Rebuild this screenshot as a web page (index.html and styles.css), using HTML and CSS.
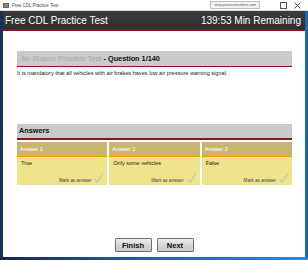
FILE: index.html
```html
<!DOCTYPE html>
<html lang="en">
<head>
  <meta charset="UTF-8">
  <meta name="viewport" content="width=device-width, initial-scale=1.0">
  <title>Free CDL Practice Test</title>
  <link rel="stylesheet" href="styles.css">
</head>
<body>
  <div class="window">
    <div class="titlebar">
      <span class="app-icon"></span>
      <span class="win-title">Free CDL Practice Test</span>
      <span class="url">www.practicetestsfree.com</span>
      <span class="ctl">
        <svg width="7" height="7" viewBox="0 0 7 7"><rect x="0.5" y="0.5" width="6" height="6" fill="none" stroke="#555" stroke-width="1"/></svg>
      </span>
      <span class="ctl">
        <svg width="7" height="7" viewBox="0 0 7 7"><path d="M0.5 0.5 L6.5 6.5 M6.5 0.5 L0.5 6.5" stroke="#555" stroke-width="1"/></svg>
      </span>
    </div>

    <div class="frame">
      <div class="app">
        <header class="topbar">
          <span>Free CDL Practice Test</span>
          <span>139:53 Min Remaining</span>
        </header>

        <main class="content">
          <div class="section-bar question-bar"><span class="muted">Air Brakes Practice Test</span> - Question 1/140</div>
          <p class="question">It is mandatory that all vehicles with air brakes haves low air pressure warning signal.</p>

          <div class="section-bar answers-bar">Answers</div>
          <div class="answers">
            <div class="answer">
              <div class="answer-head">Answer 1</div>
              <div class="answer-body">
                <div class="answer-text">True</div>
                <div class="mark">Mark as answer
                  <svg width="10" height="11" viewBox="0 0 10 11"><path d="M0.8 7 L3.2 10 L9.4 0.6" fill="none" stroke="#c3c8b4" stroke-width="1.3"/></svg>
                </div>
              </div>
            </div>
            <div class="answer">
              <div class="answer-head">Answer 2</div>
              <div class="answer-body">
                <div class="answer-text">Only some vehicles</div>
                <div class="mark">Mark as answer
                  <svg width="10" height="11" viewBox="0 0 10 11"><path d="M0.8 7 L3.2 10 L9.4 0.6" fill="none" stroke="#c3c8b4" stroke-width="1.3"/></svg>
                </div>
              </div>
            </div>
            <div class="answer">
              <div class="answer-head">Answer 3</div>
              <div class="answer-body">
                <div class="answer-text">False</div>
                <div class="mark">Mark as answer
                  <svg width="10" height="11" viewBox="0 0 10 11"><path d="M0.8 7 L3.2 10 L9.4 0.6" fill="none" stroke="#c3c8b4" stroke-width="1.3"/></svg>
                </div>
              </div>
            </div>
          </div>
        </main>

        <div class="nav">
          <button class="btn">Finish</button>
          <button class="btn">Next</button>
        </div>
      </div>
    </div>

    <div class="taskbar"></div>
  </div>
</body>
</html>
```

FILE: styles.css
```css
body {
  margin: 0;
  padding: 0;
  font-family: "Liberation Sans", Arial, sans-serif;
  background: #ffffff;
}

.window {
  width: 308px;
  height: 260px;
  display: flex;
  flex-direction: column;
  overflow: hidden;
}

/* window chrome */
.titlebar {
  height: 11px;
  display: flex;
  align-items: center;
  background: #ffffff;
  border-bottom: 1px solid #d8d8d8;
  box-sizing: border-box;
  padding: 0 4px 0 3px;
}

.app-icon {
  width: 6px;
  height: 5px;
  background: #8a8a8a;
  border: 1px solid #666;
  box-sizing: border-box;
  margin-right: 3px;
}

.win-title {
  font-size: 4.5px;
  color: #444;
  flex: 1;
}

.url {
  font-size: 3.5px;
  color: #555;
  border: 1px solid #c0c0c0;
  background: #f3f3f3;
  padding: 1px 3px;
  margin-right: 16px;
}

.ctl {
  width: 14px;
  display: flex;
  justify-content: center;
}

.frame {
  flex: 1;
  display: flex;
  border-left: 3px solid #17325a;
  border-right: 3px solid #1f66b4;
  min-height: 0;
}

.taskbar {
  height: 3px;
  background: linear-gradient(to right, #122a4c, #1d5aa0 40%, #2b8ae0);
}

.app {
  flex: 1;
  display: flex;
  flex-direction: column;
  background: #ffffff;
}

/* app header */
.topbar {
  height: 18px;
  display: flex;
  align-items: center;
  justify-content: space-between;
  padding: 0 4px 0 2px;
  background: linear-gradient(#3c3c3c, #2e2e2e);
  border-bottom: 2px solid #7a1c1f;
  color: #ffffff;
  font-size: 10px;
}

.content {
  flex: 1;
  padding: 20px 13px 0 14px;
}

.section-bar {
  background: #cacaca;
  border-bottom: 1px solid #7a1c1f;
  font-size: 7.3px;
  font-weight: bold;
  color: #111;
  padding: 0 4px;
}

.question-bar {
  line-height: 15px;
}

.muted {
  color: #a9a9a9;
  font-weight: normal;
  font-size: 7.6px;
}

.question {
  font-size: 5.6px;
  color: #222;
  margin: 3px 0 0 0;
}

.answers-bar {
  margin-top: 48px;
  line-height: 14px;
  border-bottom-width: 2px;
  padding-left: 2px;
}

.answers {
  display: grid;
  grid-template-columns: repeat(3, 1fr);
  gap: 2px;
  margin-top: 2px;
}

.answer-head {
  height: 14px;
  background: #c6b66f;
  border-bottom: 1px solid #f0a000;
  color: #ffffff;
  font-size: 5.5px;
  display: flex;
  align-items: center;
  padding-left: 3px;
}

.answer-body {
  height: 28px;
  background: #efe48c;
  display: flex;
  flex-direction: column;
  justify-content: space-between;
  padding: 3px 3px 2px 4px;
  box-sizing: border-box;
}

.answer-text {
  font-size: 5.5px;
  color: #222;
}

.mark {
  align-self: flex-end;
  display: flex;
  align-items: flex-end;
  gap: 3px;
  font-size: 4.6px;
  color: #444;
}

/* bottom navigation */
.nav {
  display: flex;
  justify-content: center;
  gap: 5px;
  padding-bottom: 5px;
}

.btn {
  width: 37px;
  height: 14px;
  padding: 0;
  font-family: "Liberation Sans", Arial, sans-serif;
  font-size: 7.5px;
  font-weight: bold;
  color: #111;
  background: linear-gradient(#eeeeee, #d6d6d6 50%, #c8c8c8);
  border: 1px solid #707070;
  border-radius: 1px;
}
```
